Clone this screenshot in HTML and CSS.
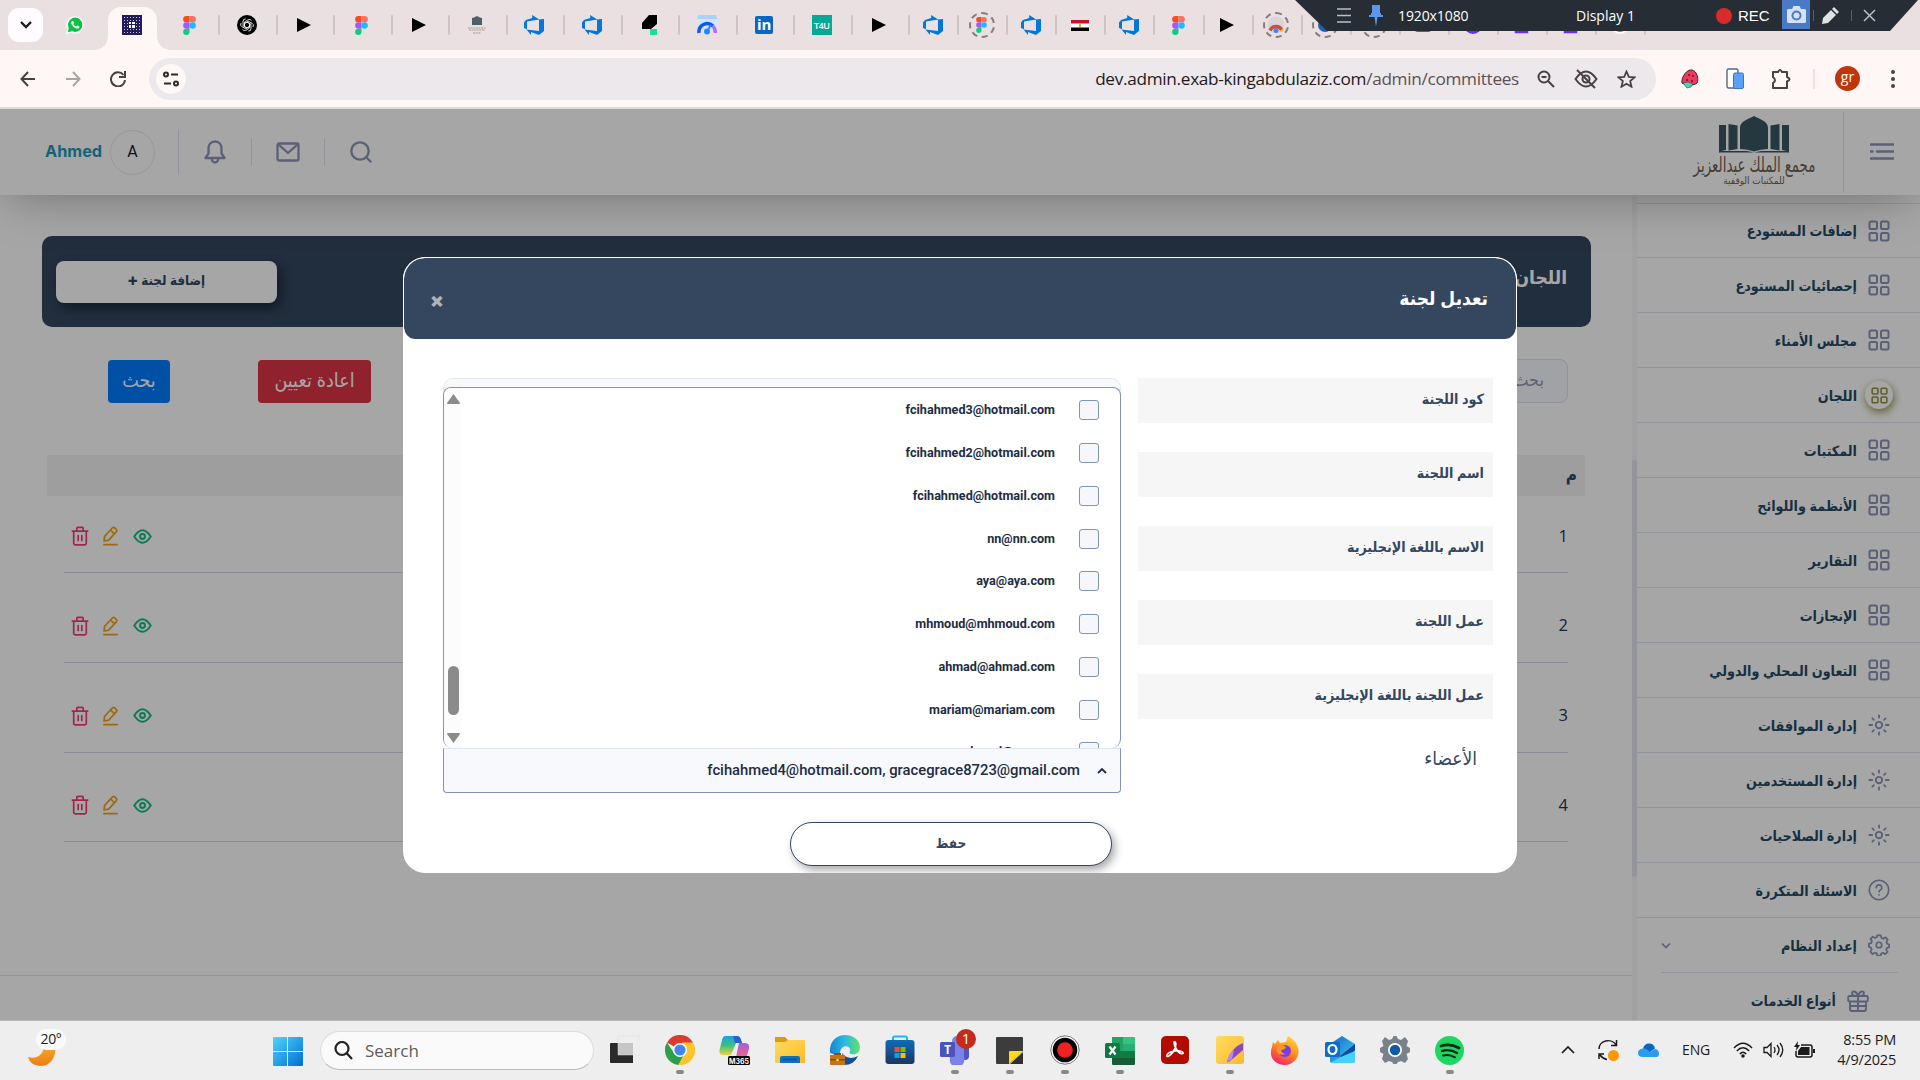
FILE: index.html
```html
<!DOCTYPE html>
<html lang="ar">
<head>
<meta charset="utf-8">
<title>اللجان</title>
<link rel="stylesheet" href="styles.css">
</head>
<body>
<svg class="defs" width="0" height="0">
  <defs>
    <linearGradient id="gWin" x2="1" y2="1"><stop stop-color="#4fd3ff"/><stop offset="1" stop-color="#0070d0"/></linearGradient>
    <linearGradient id="gMoon" x2="0" y2="1"><stop stop-color="#f4a82c"/><stop offset="1" stop-color="#ef7d12"/></linearGradient>
    <linearGradient id="gFold" x2="1" y2="1"><stop stop-color="#ffdc60"/><stop offset="1" stop-color="#fdb92a"/></linearGradient>
    <linearGradient id="gEdge" x2="1" y2="0"><stop stop-color="#1583d8"/><stop offset=".5" stop-color="#2bbbe0"/><stop offset="1" stop-color="#66e06a"/></linearGradient>
    <linearGradient id="gStore" x2="0" y2="1"><stop stop-color="#0f6cb8"/><stop offset="1" stop-color="#1d3560"/></linearGradient>
    <linearGradient id="gCopA" x2="0" y2="1"><stop stop-color="#1aa0e8"/><stop offset=".5" stop-color="#3cc07d"/><stop offset="1" stop-color="#f0d040"/></linearGradient>
    <linearGradient id="gCopB" x2="0" y2="1"><stop stop-color="#a060e0"/><stop offset=".6" stop-color="#f06090"/><stop offset="1" stop-color="#f59050"/></linearGradient>
    <linearGradient id="gFox" x1=".8" y1="0" x2=".3" y2="1"><stop stop-color="#ffe03a"/><stop offset=".5" stop-color="#ff8a1e"/><stop offset="1" stop-color="#f0206a"/></linearGradient>
    <linearGradient id="gOut" x2="1" y2="1"><stop stop-color="#1467c0"/><stop offset="1" stop-color="#3fd0fa"/></linearGradient>
  </defs>
  <symbol id="figma" viewBox="0 0 12 18"><path fill="#f24e1e" d="M6 0H3a3 3 0 0 0 0 6h3z"/><path fill="#ff7262" d="M6 0h3a3 3 0 0 1 0 6H6z"/><path fill="#a259ff" d="M6 6H3a3 3 0 0 0 0 6h3z"/><circle cx="9" cy="9" r="3" fill="#1abcfe"/><path fill="#0acf83" d="M6 12H3a3 3 0 1 0 3 3z"/></symbol>
  <symbol id="play" viewBox="0 0 14 16"><path d="M0 1l14 7L0 15z"/></symbol>
  <symbol id="azure" viewBox="0 0 20 20"><path fill="#0078d7" d="M20 4v12l-5 4-8-3v3l-4.500-5.500L15 16V4.500zM15.200 4.600L8.200 0v3L2 5 0 7.500v5.600l3 1.200V6.500z"/></symbol>
  <symbol id="whatsapp" viewBox="0 0 20 20"><path fill="#fff" d="M0 20l1.500-5.500A9.600 9.600 0 1 1 5.600 18.500z"/><circle cx="10.200" cy="9.700" r="8" fill="#0cc143"/><path fill="#0cc143" d="M2 18l1.200-5 4 4z"/><path fill="#fff" d="M6.500 5.700c.7-.8 1.500-.5 1.800.3l.6 1.500c.1.500-.7 1-.7 1.300.8 1.500 1.800 2.300 3.200 2.900.5 0 .9-1.200 1.400-1.100l1.900 1c.5.400.1 1.700-.9 2.200-2 1-7.700-2.300-8-6 0-.9.300-1.600.7-2.100z"/></symbol>
  <symbol id="gpt" viewBox="0 0 20 20"><circle cx="10" cy="10" r="10"/><g fill="none" stroke="#fff" stroke-width=".8"><path id="petal" d="M10 7l2.600 1.500V13L9 15.200a2.600 2.600 0 0 1-3.600-1"/><use href="#petal" transform="rotate(60 10 10)"/><use href="#petal" transform="rotate(120 10 10)"/><use href="#petal" transform="rotate(180 10 10)"/><use href="#petal" transform="rotate(240 10 10)"/><use href="#petal" transform="rotate(300 10 10)"/></g></symbol>
  <symbol id="grid" viewBox="0 0 22 22"><g fill="none" stroke="currentColor" stroke-width="2"><rect x="1.500" y="1.500" width="7.500" height="7.500" rx="1.500"/><rect x="13" y="1.500" width="7.500" height="7.500" rx="1.500"/><rect x="1.500" y="13" width="7.500" height="7.500" rx="1.500"/><rect x="13" y="13" width="7.500" height="7.500" rx="1.500"/></g></symbol>
  <symbol id="sun" viewBox="0 0 24 24"><g fill="none" stroke="currentColor" stroke-width="2" stroke-linecap="round"><circle cx="12" cy="12" r="3.500"/><path d="M12 1.500v2.500M12 20v2.500M1.500 12h3M19.500 12h3M4.800 4.800l1.600 1.600M17.600 17.600l1.600 1.600M4.800 19.200l1.600-1.600M17.600 6.400l1.600-1.600"/></g></symbol>
  <symbol id="help" viewBox="0 0 24 24"><g fill="none" stroke="currentColor" stroke-width="1.800" stroke-linecap="round"><circle cx="12" cy="12" r="10.600"/><path d="M9 9.500a3 3 0 1 1 4.500 2.500c-1 .6-1.500 1-1.500 2.200M12 17.300v.2"/></g></symbol>
  <symbol id="gear" viewBox="0 0 24 24"><g fill="none" stroke="currentColor" stroke-width="1.900" stroke-linejoin="round"><circle cx="12" cy="12" r="3"/><path d="M10 1.500h4l.6 2.800 2 .9 2.500-1.600 2.400 2.600-1.400 2.500.8 2 2.100.8v3l-2.300.6-.8 2 1.500 2.400-2.600 2.500-2.400-1.500-2 .8-.7 2.300h-3.500l-.7-2.400-2-.8-2.500 1.500-2.400-2.500 1.500-2.400-.8-2L1 14v-3.500l2.500-.6.8-2-1.500-2.500 2.400-2.500 2.500 1.400 1.800-.8z"/></g></symbol>
  <symbol id="gift" viewBox="0 0 22 22"><g fill="none" stroke="currentColor" stroke-width="1.900" stroke-linejoin="round"><rect x="1.200" y="6" width="19.600" height="5.500" rx="1.200"/><path d="M3 11.500V19q0 2 2 2h12q2 0 2-2v-7.500M11 6v15M11 6C8 6 5 5.500 5 3.200S9 0 11 6c2-6 6-5 6-2.800S14 6 11 6M3 16h16"/></g></symbol>
  <symbol id="trash" viewBox="0 0 20 22"><g fill="none" stroke="currentColor" stroke-width="1.900" stroke-linecap="round"><path d="M1.500 5.500h17M3 5.500V19q0 1.800 1.800 1.800h10.400Q17 20.800 17 19V5.500M6.500 5V2.500q0-1 1-1h5q1 0 1 1V5M8 10.500v5.500M12 10.500v5.500"/></g></symbol>
  <symbol id="pen" viewBox="0 0 18 22"><g fill="none" stroke="currentColor" stroke-width="1.900" stroke-linejoin="round"><path d="M2 16.500l.5-5L11 2.200q1.300-1.300 2.700 0l1.600 1.500q1.300 1.300 0 2.700L7 15.500zM9.300 4.500l3.800 4M1 20.500h16"/></g></symbol>
  <symbol id="eye" viewBox="0 0 20 16"><g fill="none" stroke="currentColor" stroke-width="2.100"><path d="M1.200 8q8.800-13.500 17.600 0-8.800 13.500-17.600 0z"/><circle cx="10" cy="8" r="2.600"/></g></symbol>
</svg>

<header class="tabs" dir="ltr">
  <div class="tab-menu"><svg width="14" height="10" viewBox="0 0 14 10"><path d="M2 2l5 5 5-5" fill="none" stroke="#201a1b" stroke-width="2.400"/></svg></div>
  <div class="tab pinned"><svg width="18" height="20"><use href="#whatsapp"/></svg></div>
  <div class="tab active"><svg width="20" height="20" viewBox="0 0 20 20"><path fill="#201c56" d="M0 0h20v20H0z"/><g fill="none" stroke="#c9c6e6" stroke-dasharray="1 2"><path d="M2 2.500h17M2 5.500h17M2 8.500h17M2 11.500h17M2 14.500h17M2 17.500h17"/></g><path fill="#fff" d="M7 7h2v2H7zM10 7h3v2h-3zM7 10h2v3H7zM10 10h3v3h-3z"/></svg></div>
  <div class="tab first"><svg width="13" height="19"><use href="#figma"/></svg></div>
  <div class="tab"><svg width="20" height="20"><use href="#gpt"/></svg></div>
  <div class="tab"><svg width="14" height="16"><use href="#play"/></svg></div>
  <div class="tab"><svg width="13" height="19"><use href="#figma"/></svg></div>
  <div class="tab"><svg width="14" height="16"><use href="#play"/></svg></div>
  <div class="tab"><svg width="20" height="18" viewBox="0 0 20 18"><path fill="#4d6069" d="M5 2l2-.5L10 0l3 1.500 2 .5v7H5z"/><path d="M1 12h18M2 14h16M6 17h8" stroke="#a79a90" stroke-dasharray="2 .6"/></svg></div>
  <div class="tab"><svg width="20" height="20"><use href="#azure"/></svg></div>
  <div class="tab"><svg width="20" height="20"><use href="#azure"/></svg></div>
  <div class="tab"><svg width="15" height="20" viewBox="0 0 15 20"><path d="M7 0h8v9l-6 5H0V8z"/><path fill="#1bdc9a" d="M8 14h7v6H8z"/></svg></div>
  <div class="tab"><svg width="20" height="20" viewBox="0 0 20 20"><path fill="#a9d2fb" d="M1 0h18l1 4H0z"/><path fill="#cfe6fd" d="M0 4h20v11H0z"/><path d="M2 18a8.300 8.300 0 0 1 14-7" fill="none" stroke="#1556f0" stroke-width="3.500"/><path d="M16 11q2.500 3 2.300 7" fill="none" stroke="#b66bf5" stroke-width="3.500"/><circle cx="10" cy="16.500" r="3" fill="#1a8cff"/><path d="M10 16l4-6" stroke="#1a8cff" stroke-width="2"/></svg></div>
  <div class="tab"><span class="fav linkedin">in</span></div>
  <div class="tab"><span class="fav teal">T4U</span></div>
  <div class="tab"><svg width="14" height="16"><use href="#play"/></svg></div>
  <div class="tab narrow"><svg width="20" height="20"><use href="#azure"/></svg></div>
  <div class="tab narrow"><span class="ring"><svg width="11" height="16"><use href="#figma"/></svg></span></div>
  <div class="tab narrow"><svg width="20" height="20"><use href="#azure"/></svg></div>
  <div class="tab narrow"><svg width="18" height="11" viewBox="0 0 18 11"><path fill="#fff" d="M0 0h18v11H0z"/><path fill="#c8102e" d="M0 0h18v3.500H0z"/><path d="M0 7.500h18V11H0z"/><path fill="#d6a53a" d="M8 4h2v3H8z"/></svg></div>
  <div class="tab narrow"><svg width="20" height="20"><use href="#azure"/></svg></div>
  <div class="tab narrow"><svg width="13" height="19"><use href="#figma"/></svg></div>
  <div class="tab narrow"><svg width="14" height="16"><use href="#play"/></svg></div>
  <div class="tab narrow"><span class="ring"><svg width="18" height="18" viewBox="0 0 18 18"><circle cx="9" cy="9" r="8.500" fill="#d9d5d6"/><path d="M3 14.500a6.500 6.500 0 0 1 12 0" fill="none" stroke="#d9473a" stroke-width="3.500"/><circle cx="9" cy="14.500" r="2.500" fill="#4285f4"/><path d="M12 15.500l4-3v3z" fill="#fbc116"/></svg></span></div>
  <div class="tab narrow"><span class="ring"><svg width="16" height="16"><circle cx="8" cy="8" r="7" fill="#1a62b8"/></svg></span></div>
  <div class="tab narrow"><span class="ring"><svg width="16" height="16"><circle cx="8" cy="8" r="6" fill="#3aa757"/></svg></span></div>
  <div class="tab narrow"><svg width="18" height="14"><rect width="18" height="14" rx="4" fill="#e0244a"/></svg></div>
  <div class="tab narrow"><svg width="18" height="18"><circle cx="9" cy="9" r="9" fill="#6a2cf5"/></svg></div>
  <div class="tab narrow"><svg width="16" height="18"><path d="M2 1v15h11V1" fill="#fff" stroke="#6a2cf5" stroke-width="2.500"/></svg></div>
  <div class="tab narrow"><svg width="16" height="18"><path d="M2 1v15h11V1" fill="#fff" stroke="#6a2cf5" stroke-width="2.500"/></svg></div>
  <div class="tab narrow"><svg width="18" height="18"><circle cx="9" cy="9" r="8" fill="#2fa45a" stroke="#fff" stroke-width="2"/></svg></div>

  <div class="recorder">
    <svg width="14" height="18" viewBox="0 0 14 18"><path d="M0 2h14M0 8.500h14M0 15h14" stroke="#b9bfc5" stroke-width="1.600"/></svg>
    <svg class="rec-pin" width="14" height="22" viewBox="0 0 14 22"><path fill="#5b97ee" d="M3 0h8v8h1v2h2v2H8.500L7 22l-1.500-10H0v-2h2V8h1z"/></svg>
    <span class="rec-size">1920x1080</span>
    <span class="rec-display">Display 1</span>
    <span class="rec-dot"></span><span class="rec-label">REC</span>
    <span class="rec-cam"><svg width="19" height="17" viewBox="0 0 19 17"><path fill="#d5e2f5" d="M1 3h4l1.500-3h6L14 3h4l1 1v12l-1 1H1l-1-1V4z"/><circle cx="9.500" cy="9.500" r="5" fill="#4a7ac6"/><circle cx="9.500" cy="9.500" r="3" fill="#d5e2f5"/></svg></span>
    <i class="rec-sep"></i>
    <svg width="17" height="18" viewBox="0 0 17 18"><path fill="#dfe2e5" d="M0 17l1-6 8-8 5 5-8 8zM10 2l2-2 5 5-2 2z"/></svg>
    <i class="rec-sep wide"></i>
    <svg width="13" height="13" viewBox="0 0 13 13"><path d="M1 1l11 11M12 1L1 12" stroke="#b9bfc5" stroke-width="1.500"/></svg>
  </div>
</header>

<nav class="toolbar" dir="ltr">
  <svg width="16" height="16" viewBox="0 0 16 16"><path d="M15 8H2M8 1L1.500 8 8 15" fill="none" stroke="#4b3f41" stroke-width="2"/></svg>
  <svg width="16" height="16" viewBox="0 0 16 16"><path d="M1 8h13M8 1l6.500 7L8 15" fill="none" stroke="#aca3a4" stroke-width="2"/></svg>
  <svg width="16" height="16" viewBox="0 0 16 16"><path d="M13.500 4A7 7 0 1 0 15 9M15 0v6H9" fill="none" stroke="#4b3f41" stroke-width="2"/></svg>
  <div class="omnibox">
    <span class="site"><svg width="16" height="16" viewBox="0 0 16 16"><g fill="none" stroke="#33292b" stroke-width="2"><circle cx="3" cy="3.500" r="2"/><path d="M8 3.500h7M1 12.500h7"/><circle cx="13" cy="12.500" r="2"/></g></svg></span>
    <span class="url">dev.admin.exab-kingabdulaziz.com<em>/admin/committees</em></span>
    <svg width="18" height="18" viewBox="0 0 18 18"><g fill="none" stroke="#4b3f41" stroke-width="2"><circle cx="7" cy="7" r="5.500"/><path d="M11 11l6 6M4.500 7h5"/></g></svg>
    <svg width="24" height="20" viewBox="0 0 24 20"><g fill="none" stroke="#4b3f41" stroke-width="2"><path d="M1.500 10Q12-5 22.500 10 12 25 1.500 10z"/><circle cx="12" cy="10" r="3.500"/><path d="M3 1l18 18"/></g></svg>
    <svg width="19" height="18" viewBox="0 0 19 18"><path d="M9.500 1.500l2.300 5.300 5.700.5-4.300 3.800 1.300 5.600-5-3-5 3 1.300-5.600L1.500 7.300l5.700-.5z" fill="none" stroke="#4b3f41" stroke-width="1.800"/></svg>
  </div>
  <div class="ext">
    <svg width="18" height="20" viewBox="0 0 18 20"><path d="M11 1c5 1 7 9 5 13-3 3-12 2-15 0C0 8 6 0 11 1z" fill="#f0385f" stroke="#3c2228"/><path fill="#4fd3a7" stroke="#245" stroke-width=".6" d="M2 14l5-1 5 2-2 3-4 1z"/><path d="M8 5v2M12 6v2M6 10v2M11 11v2" stroke="#5e1428" stroke-width="1.400"/></svg>
    <svg width="18" height="21" viewBox="0 0 18 21"><rect x="1" y="1" width="11" height="19" rx="1.500" fill="#fff" stroke="#5b6672" stroke-width="1.400"/><rect x="7.500" y="5" width="10" height="15.500" rx="1.500" fill="#5aa2f8" stroke="#3a76c8"/></svg>
    <svg width="21" height="20" viewBox="0 0 21 20"><path d="M2 3h5q2-4 4 0h5v5q5 2 0 4.500V19H2v-5q4-2.500 0-6z" fill="none" stroke="#4b3f41" stroke-width="2" stroke-linejoin="round"/></svg>
    <i class="ext-sep"></i>
    <span class="avatar">gr</span>
    <svg width="4" height="18" viewBox="0 0 4 18"><g fill="#4b3f41"><circle cx="2" cy="2" r="2"/><circle cx="2" cy="9" r="2"/><circle cx="2" cy="16" r="2"/></g></svg>
  </div>
</nav>

<div class="page" dir="ltr">
  <div class="topbar">
    <span class="user">Ahmed</span><span class="initial">A</span>
    <span class="tool bell"><svg width="22" height="24" viewBox="0 0 22 24"><g fill="none" stroke="currentColor" stroke-width="2.300" stroke-linejoin="round"><path d="M11 1.500c-4.500 0-6.500 3.500-6.500 7v5L1.500 18h19l-3-4.500v-5c0-3.500-2-7-6.500-7zM7.500 18.500q1 4 3.500 4t3.500-4"/></g></svg></span>
    <span class="tool"><svg width="24" height="20" viewBox="0 0 24 20"><g fill="none" stroke="currentColor" stroke-width="2.300" stroke-linejoin="round"><rect x="1.500" y="1.500" width="21" height="17" rx="1.500"/><path d="M2 2l10 9L22 2"/></g></svg></span>
    <span class="tool"><svg width="22" height="22" viewBox="0 0 22 22"><g fill="none" stroke="currentColor" stroke-width="2.300" stroke-linecap="round"><circle cx="10" cy="10" r="8.700"/><path d="M17 17l3.500 3.500"/></g></svg></span>
    <div class="brand">
      <svg width="70" height="37" viewBox="0 0 70 37"><g fill="#3a5663"><path d="M0 9h7v25q-3.500 0-7 2.500zM9.500 8l9 1.500V33l-9 1.500zM21 33V12C21 5 29 3.500 35 0c6 3.500 14 5 14 12v21q-8 0-14 2.500Q29 33 21 33zM51.500 9.500l9-1.500v26.500l-9-1.500zM63 9h7v27.500Q66.500 34 63 34z"/><path d="M0 35h28l7 1.500 7-1.500h28v1.500H0z"/></g></svg>
      <span class="brand-name">مجمع الملك عبدالعزيز</span>
      <span class="brand-sub">للمكتبات الوقفية</span>
    </div>
    <span class="menu-btn"><svg width="24" height="18" viewBox="0 0 24 18"><path d="M1 1.500h22M7 8.500h16M1 15.500h22M1 8.500h1.500" stroke="currentColor" stroke-width="2.600" stroke-linecap="round"/></svg></span>
  </div>
  <div class="content">
    <main class="main" dir="rtl">
      <div class="banner"><h1>اللجان</h1><button class="add">إضافة لجنة <b>+</b></button></div>
      <div class="filters"><div class="search-input">بحث</div><button class="btn red">اعادة تعيين</button><button class="btn blue">بحث</button></div>
      <div class="thead">م</div>
      <div class="row"><span>1</span><div class="acts" dir="ltr"><svg class="del"><use href="#trash"/></svg><svg class="edit"><use href="#pen"/></svg><svg class="view"><use href="#eye"/></svg></div></div>
      <div class="row"><span>2</span><div class="acts" dir="ltr"><svg class="del"><use href="#trash"/></svg><svg class="edit"><use href="#pen"/></svg><svg class="view"><use href="#eye"/></svg></div></div>
      <div class="row"><span>3</span><div class="acts" dir="ltr"><svg class="del"><use href="#trash"/></svg><svg class="edit"><use href="#pen"/></svg><svg class="view"><use href="#eye"/></svg></div></div>
      <div class="row"><span>4</span><div class="acts" dir="ltr"><svg class="del"><use href="#trash"/></svg><svg class="edit"><use href="#pen"/></svg><svg class="view"><use href="#eye"/></svg></div></div>
      <div class="foot"></div>
    </main>
    <div class="track"><div class="thumb"></div></div>
    <aside class="sidebar" dir="rtl">
      <div class="item"><svg><use href="#grid"/></svg><span>إضافات المستودع</span></div>
      <div class="item"><svg><use href="#grid"/></svg><span>إحصائيات المستودع</span></div>
      <div class="item"><svg><use href="#grid"/></svg><span>مجلس الأمناء</span></div>
      <div class="item on"><i><svg><use href="#grid"/></svg></i><span>اللجان</span></div>
      <div class="item"><svg><use href="#grid"/></svg><span>المكتبات</span></div>
      <div class="item"><svg><use href="#grid"/></svg><span>الأنظمة واللوائح</span></div>
      <div class="item"><svg><use href="#grid"/></svg><span>التقارير</span></div>
      <div class="item"><svg><use href="#grid"/></svg><span>الإنجازات</span></div>
      <div class="item"><svg><use href="#grid"/></svg><span>التعاون المحلي والدولي</span></div>
      <div class="item"><svg><use href="#sun"/></svg><span>إدارة الموافقات</span></div>
      <div class="item"><svg><use href="#sun"/></svg><span>إدارة المستخدمين</span></div>
      <div class="item"><svg><use href="#sun"/></svg><span>إدارة الصلاحيات</span></div>
      <div class="item"><svg><use href="#help"/></svg><span>الاسئلة المتكررة</span></div>
      <div class="item last"><svg><use href="#gear"/></svg><span>إعداد النظام</span><svg class="chev" viewBox="0 0 10 7"><path d="M1 1.500l4 4 4-4" fill="none" stroke="currentColor" stroke-width="1.700"/></svg></div>
      <div class="item sub"><svg><use href="#gift"/></svg><span>أنواع الخدمات</span></div>
    </aside>
  </div>
  <div class="overlay">
    <section class="modal" dir="rtl">
      <div class="modal-head"><h2>تعديل لجنة</h2><span class="close">×</span></div>
      <div class="form">
        <div class="labels">
          <label>كود اللجنة</label><label>اسم اللجنة</label><label>الاسم باللغة الإنجليزية</label><label>عمل اللجنة</label><label>عمل اللجنة باللغة الإنجليزية</label>
          <p>الأعضاء</p>
        </div>
        <div class="fields">
          <div class="peek"></div>
          <div class="list">
            <div class="options">
              <div class="opt"><i></i><span>fcihahmed3@hotmail.com</span></div>
              <div class="opt"><i></i><span>fcihahmed2@hotmail.com</span></div>
              <div class="opt"><i></i><span>fcihahmed@hotmail.com</span></div>
              <div class="opt"><i></i><span>nn@nn.com</span></div>
              <div class="opt"><i></i><span>aya@aya.com</span></div>
              <div class="opt"><i></i><span>mhmoud@mhmoud.com</span></div>
              <div class="opt"><i></i><span>ahmad@ahmad.com</span></div>
              <div class="opt"><i></i><span>mariam@mariam.com</span></div>
              <div class="opt"><i></i><span>ahmed@aa.com</span></div>
            </div>
            <div class="scroll"><svg width="13" height="10"><path d="M6.500 0L13 9q0 1-1 1H1q-1 0-1-1z" fill="#8b8b8b"/></svg><b></b><svg width="13" height="10"><path d="M6.500 10L0 1q0-1 1-1h11q1 0 1 1z" fill="#8b8b8b"/></svg></div>
          </div>
          <div class="select"><svg width="10" height="7" viewBox="0 0 10 7"><path d="M1 6l4-4 4 4" fill="none" stroke="#212c42" stroke-width="1.900"/></svg><span dir="ltr">fcihahmed4@hotmail.com, gracegrace8723@gmail.com</span></div>
          <button class="save">حفظ</button>
        </div>
      </div>
    </section>
  </div>
</div>

<footer class="taskbar" dir="ltr">
  <div class="weather"><svg width="28" height="24" viewBox="0 0 28 24"><path fill="url(#gMoon)" d="M0 13c9 3 16-3 16-11h11c2 12-6 20-14 20C6 22 1 18 0 13z"/></svg><span>20°</span></div>
  <svg class="win" width="30" height="30" viewBox="0 0 30 30"><path fill="url(#gWin)" d="M0 1h14v14H0zM15 1h14q1 0 1 1v13H15zM0 16h14v14H1q-1 0-1-1zM15 16h15v13q0 1-1 1H15z"/></svg>
  <div class="tb-search"><svg width="19" height="19" viewBox="0 0 19 19"><g fill="none" stroke="#222" stroke-width="2.200"><circle cx="8" cy="7.500" r="6.500"/><path d="M12.500 12l5.500 6"/></g></svg>Search</div>
  <div class="apps">
    <div class="app"><svg width="30" height="30" viewBox="0 0 30 30"><path fill="#292929" d="M0 9q0-1 1-1h22v20H1q-1 0-1-1z"/><path fill="#eee" fill-opacity=".8" stroke="#ddd" stroke-width=".5" d="M8 1h22v19H8z"/></svg></div>
    <div class="app run"><svg width="30" height="30" viewBox="0 0 30 30"><path fill="#dc3b30" d="M15 15L2 7.500a15 15 0 0 1 26 0z"/><path fill="#2f9e4b" d="M2 7.500A15 15 0 0 0 13.500 30L20 18 9 18z"/><path fill="#fcc52e" d="M28 7.500A15 15 0 0 1 13.500 30L21.500 16 17 7.500z"/><circle cx="15" cy="15" r="7" fill="#fff"/><circle cx="15" cy="15" r="5.600" fill="#3f86ee"/></svg></div>
    <div class="app"><svg width="31" height="30" viewBox="0 0 31 30"><path fill="url(#gCopA)" d="M6 1h12q3 0 4 4l1 3h-6L12 20H4q-5 0-3-7L3 5q1-4 3-4z"/><path fill="#2a5fd0" d="M14 1h4q3 0 4 4l1 3h-7z"/><path fill="url(#gCopB)" d="M20 8h6q5 0 4 6l-3 9q-1 5-6 5h-9q4-1 5-6z"/><rect x="9" y="21" width="22" height="9" rx="1.500" fill="#000"/><text x="20" y="28.500" font-family="Inter" font-weight="700" font-size="7" fill="#fff" text-anchor="middle">M365</text></svg></div>
    <div class="app"><svg width="30" height="28" viewBox="0 0 30 28"><path fill="#dc9a0c" d="M0 1h10l3 3v4H0z"/><path fill="url(#gFold)" d="M0 6h10l3-2h16q1 0 1 1v22H1q-1 0-1-1z"/><path fill="#0f6fc0" d="M5 27v-5q0-2 2-2h16q2 0 2 2v5z"/><path d="M8 23.500h14" stroke="#0a4f94" stroke-width="1.500"/></svg></div>
    <div class="app"><svg width="30" height="30" viewBox="0 0 30 30"><path fill="#0f4f9c" d="M12 18q6 8 16 3-4 9-14 9z"/><path fill="url(#gEdge)" d="M0 18C-1 7 6 0 15 0s15 6 15 12-4 8-9 7c-3-1 0-2-1-5s-5-4-8-1-2 6-1 9z"/><path fill="#c57417" d="M0 20h15v9q0 1-1 1H1q-1 0-1-1z"/><path fill="#8d4c0c" d="M0 24h15v1.500H0zM4 20v-2h7v2z"/><circle cx="7.500" cy="25" r="1.300" fill="#ffd867"/></svg></div>
    <div class="app"><svg width="30" height="30" viewBox="0 0 30 30"><path d="M8 6V3q0-1.500 1.500-1.500h11q1.500 0 1.500 1.500v3" fill="none" stroke="#1cb8f5" stroke-width="2"/><rect x=".5" y="5" width="29" height="24" rx="3" fill="url(#gStore)"/><path fill="#f25022" d="M9.500 12h5v5h-5z"/><path fill="#7fba00" d="M15.500 12h5v5h-5z"/><path fill="#00a4ef" d="M9.500 18h5v5h-5z"/><path fill="#ffb900" d="M15.500 18h5v5h-5z"/></svg></div>
    <div class="app run"><svg width="30" height="30" viewBox="0 0 30 30"><circle cx="17" cy="6" r="5" fill="#7b83eb"/><rect x="19" y="10" width="10" height="15" rx="4" fill="#4f56bd"/><path fill="#7b83eb" d="M9 10h15v12a7 7 0 0 1-14 5z"/><rect y="7" width="15" height="15" rx="1.500" fill="#4b53bc"/><text x="7.500" y="18.500" font-family="Open Sans" font-weight="700" font-size="11.500" fill="#fff" text-anchor="middle">T</text></svg><span class="badge">1</span></div>
    <div class="app run"><svg width="27" height="27" viewBox="0 0 27 27"><path fill="#3c3c3c" d="M0 1q0-1 1-1h25q1 0 1 1v13L13 27H1q-1 0-1-1z"/><path fill="#ffd91c" d="M13 27V15q0-1 1-1h13z"/><path fill="#303030" d="M27 15v12H14z"/></svg></div>
    <div class="app run"><svg width="30" height="30"><circle cx="15" cy="15" r="14.200" fill="#fff" stroke="#777"/><circle cx="15" cy="15" r="12.300"/><circle cx="15" cy="15" r="7.800" fill="#ee2320"/></svg></div>
    <div class="app run"><svg width="30" height="29" viewBox="0 0 30 29"><path fill="#21a366" d="M7 1h11v14H7z"/><path fill="#33c481" d="M18 1h11q1 0 1 1v6H18z"/><path fill="#27b072" d="M18 8h12v7H18z"/><path fill="#107c41" d="M7 15h23v7H7z"/><path fill="#185c37" d="M7 22h23v6q0 1-1 1H8q-1 0-1-1z"/><rect y="7" width="15" height="15" rx="1.500" fill="#0f7a40"/><path d="M4.500 10.500l6 8M10.500 10.500l-6 8" stroke="#fff" stroke-width="2.200"/></svg></div>
    <div class="app"><svg width="28" height="28" viewBox="0 0 28 28"><rect width="28" height="28" rx="5" fill="#b30b00"/><path d="M13 6c3-1 2 6-1 10s-7 6-6 3 9-5 13-4 4 3 1 2.500-7-7-7-11.500z" fill="none" stroke="#fff" stroke-width="1.700"/></svg></div>
    <div class="app run"><svg width="28" height="28" viewBox="0 0 28 28"><rect width="28" height="28" rx="3" fill="url(#gFold)"/><path fill="#8b46c8" d="M27 7v7L13 26q-2 0-2-1 5-14 16-18z"/><path fill="#b58bea" d="M11 27q1-10 7-13-1 6-2 9z"/></svg></div>
    <div class="app"><svg width="28" height="29" viewBox="0 0 28 29"><path fill="url(#gFox)" d="M2 6l2 2 3-4 2 3 6-1 2-6q7 4 9 9c5 9-2 20-12 20S-3 21 1 11z"/><circle cx="14" cy="15" r="6" fill="#7a3ee0"/><path fill="#ff9420" d="M6 10q4-3 9 1-1 3-5 3 1 4 5 4-6 2-9-2z"/></svg></div>
    <div class="app"><svg width="30" height="28" viewBox="0 0 30 28"><path fill="url(#gOut)" d="M5 8L17 0l13 8v17q0 2-2 2H7q-2 0-2-2z"/><path fill="#0a4aa0" d="M15 20L30 8v6L19 24z"/><path fill="#45d2fa" d="M5 27l13-7 12-5v10q0 2-2 2z"/><rect y="6" width="15" height="15" rx="1.500" fill="#0f6cc4"/><ellipse cx="7.500" cy="13.500" rx="4" ry="4.500" fill="none" stroke="#fff" stroke-width="2.200"/></svg></div>
    <div class="app"><svg width="30" height="28" viewBox="0 0 30 28"><path fill="#78828c" d="M12 3l1.500-3h3L18 3l3 1 4-3 3 4-1.500 5 3.500 2v4l-3.500 2 1.500 5-3 4-4-2-3 1-1.500 2h-3L12 26l-3-1-4 2-3-4 1.500-5L0 16v-4l3.500-2L2 5l3-4 4 3z"/><circle cx="15" cy="14" r="7" fill="#fff"/><circle cx="15" cy="14" r="5.200" fill="#0f5aa8"/></svg></div>
    <div class="app run"><svg width="29" height="29" viewBox="0 0 29 29"><circle cx="14.500" cy="14.500" r="14.500" fill="#1ed760"/><g fill="none" stroke="#10271a" stroke-linecap="round"><path d="M6 10q9-3 18 2" stroke-width="2.800"/><path d="M7 15q8-2.500 15 2" stroke-width="2.300"/><path d="M8 19.500q6-1.800 12 1.800" stroke-width="2"/></g></svg></div>
  </div>
  <div class="tray">
    <svg width="14" height="9" viewBox="0 0 14 9"><path d="M1 8l6-6 6 6" fill="none" stroke="#1a1a1a" stroke-width="1.700"/></svg>
    <svg width="22" height="22" viewBox="0 0 22 22"><g fill="none" stroke="#1a1a1a" stroke-width="1.500"><path d="M2 10a9 8 0 0 1 17-4M19.500 1v5.500H14M2 20v-5h5M3 16q3 4 7 4.500"/></g><circle cx="16.500" cy="16.500" r="5.500" fill="#ff9800"/></svg>
    <svg width="21" height="14" viewBox="0 0 21 14"><path fill="#0b66c3" d="M5 6q1-6 7-5.500 4 .5 5 5L9 11z"/><path fill="#2a9cf0" d="M5 14q-5 0-5-4t5-4.500Q8 5 12 9l5-3q4 .5 4 4.500T17 14z"/></svg>
    <span class="lang">ENG</span>
    <svg width="20" height="16" viewBox="0 0 20 16"><g fill="none" stroke="#1a1a1a" stroke-width="1.500"><path d="M1 6q9-9.500 18 0M3.800 9q6.200-6.500 12.400 0M6.800 12q3.200-3.500 6.400 0"/></g><circle cx="10" cy="14" r="1.800" fill="#1a1a1a"/></svg>
    <svg width="21" height="16" viewBox="0 0 21 16"><g fill="none" stroke="#1a1a1a" stroke-width="1.300"><path d="M1 5.500h3l4-4v13l-4-4H1zM11 5q2 3 0 6M14 3q4 5 0 10M17 1q5.500 7 0 14"/></g></svg>
    <svg width="21" height="17" viewBox="0 0 21 17"><path d="M7 4h9q2 0 2 2v8q0 2-2 2H4q-2 0-2-2v-4" fill="none" stroke="#1a1a1a" stroke-width="1.500"/><path fill="#1a1a1a" d="M7 6h8.500v8H4v-4zM19 8h2v4h-2zM4 0L0 6h2.500L2 10l4-6H3.500z"/></svg>
    <div class="clock"><span>8:55 PM</span><span>4/9/2025</span></div>
  </div>
</footer>
</body>
</html>
```
FILE: styles.css
```css
* { box-sizing: border-box; }
body { margin: 0; width: 1920px; height: 1080px; overflow: hidden; display: flex; flex-direction: column; font-family: "Open Sans", "DejaVu Sans Condensed", "DejaVu Sans", sans-serif; background: #eee; }
svg { flex: none; display: block; }
.defs { position: absolute; }
h1, h2, p { margin: 0; }
button { font-family: inherit; border: 0; padding: 0; }

/* browser tabs */
.tabs { position: relative; height: 50px; flex: none; background: #eae0e1; display: flex; align-items: center; }
.tab-menu { width: 35px; height: 34px; margin-left: 8px; border-radius: 11px; background: #fffbff; display: flex; align-items: center; justify-content: center; }
.tab { position: relative; width: 57.5px; flex: none; height: 50px; display: flex; align-items: center; justify-content: center; }
.tab::after { content: ""; position: absolute; right: -1px; top: 15px; width: 2px; height: 20px; background: #cfc4c5; border-radius: 1px; }
.tab.pinned { width: 65px; padding-right: 2px; }
.tab.active { width: 49px; height: 43px; padding: 0 1px 7px 0; align-self: flex-end; background: #fff7f5; border-radius: 13px 13px 0 0; }
.tab.active::before { content: ""; position: absolute; left: -13px; right: -13px; bottom: 0; height: 13px; background: radial-gradient(circle at 0 0, transparent 12.500px, #fff7f5 13px) left / 13px 13px no-repeat, radial-gradient(circle at 100% 0, transparent 12.500px, #fff7f5 13px) right / 13px 13px no-repeat; }
.tab.active::after, .tab.pinned::after { display: none; }
.tab.first { width: 57px; margin-left: 5px; }
.tab { padding-right: 2px; }
.tab.narrow { width: 49.100px; }
.fav { height: 18px; display: flex; align-items: center; justify-content: center; color: #fff; font-weight: 700; }
.linkedin { width: 18px; background: #0a66c2; border-radius: 2px; font-size: 15px; padding-bottom: 2px; }
.teal { width: 20px; height: 20px; background: #08a796; font-size: 9px; letter-spacing: -.5px; font-weight: 600; }
.ring { width: 26px; height: 26px; flex: none; border: 2px dashed #8b7b7e; border-radius: 50%; display: flex; align-items: center; justify-content: center; }
.recorder { position: absolute; left: 1295px; top: 0; width: 623px; height: 31px; padding: 0 27px 0 42px; background: #262d34; clip-path: polygon(0 0, 100% 0, 595px 100%, 32px 100%); display: flex; align-items: center; color: #fff; font-size: 14px; }
.rec-pin { margin-left: 18px; }
.rec-size { margin-left: 15px; width: 178px; font-size: 14px; letter-spacing: -.1px; }
.rec-display { width: 140px; }
.rec-dot { width: 16px; height: 16px; border-radius: 50%; background: #d92b28; }
.rec-label { width: 44px; margin-left: 6px; font-family: "Liberation Sans"; font-size: 15px; }
.rec-cam { width: 28px; height: 29px; background: #4a7ac6; display: flex; align-items: center; justify-content: center; margin-top: -2px; }
.rec-sep { width: 1px; height: 11px; background: #596069; margin: 0 8px 0 3px; }
.rec-sep.wide { margin: 0 11px 0 12px; }

/* address bar */
.toolbar { height: 59px; flex: none; background: #fff7f5; border-bottom: 2px solid #e0dad8; display: flex; align-items: center; gap: 29px; padding-left: 20px; }
.omnibox { width: 1507px; height: 42px; margin-left: -6px; border-radius: 21px; background: #ede8ec; display: flex; align-items: center; padding: 0 20px 0 7px; }
.site { width: 30px; height: 30px; border-radius: 50%; background: #fff7f5; display: flex; align-items: center; justify-content: center; }
.url { margin-left: auto; margin-right: 18px; font-size: 17.200px; letter-spacing: -.3px; color: #211b1c; white-space: nowrap; }
.url em { font-style: normal; color: #5b5154; }
.omnibox svg + svg { margin-left: 19px; }
.ext { display: flex; align-items: center; margin-left: -4px; }
.ext svg + svg { margin-left: 27px; }
.ext-sep { width: 2px; height: 20px; background: #fbd9dd; margin: 0 20px 0 21px; }
.avatar { width: 25px; height: 25px; border-radius: 50%; background: #bf360c; color: #fff; font-size: 14px; line-height: 22px; text-align: center; margin-right: 31px; }

/* application */
.page { position: relative; height: 911px; flex: none; overflow: hidden; background: #fff; display: flex; flex-direction: column; }
.topbar { height: 86px; flex: none; z-index: 2; background: #fff; display: flex; align-items: center; padding-left: 45px; color: #8a96b5; box-shadow: 0 8px 50px -8px rgba(0, 0, 0, .35); }
.user { width: 65px; font: 700 16.300px/20px Inter, sans-serif; color: #1e99b8; padding-bottom: 2px; }
.initial { width: 45px; height: 45px; border: 1px solid #e7eaf3; border-radius: 50%; color: #16192c; font: 16px/42px Roboto, sans-serif; text-align: center; margin-right: 23px; }
.tool { width: 73px; height: 28px; border-left: 1px solid #dfe3ef; display: flex; align-items: center; justify-content: center; padding-right: 1px; }
.tool.bell { height: 46px; }
.brand { width: 179px; height: 80px; margin-left: auto; border-right: 1px solid #dfe3ef; display: flex; flex-direction: column; align-items: center; padding: 4px 0 0; color: #6e6154; }
.brand-name { font-size: 18px; line-height: 22px; white-space: nowrap; font-weight: 400; transform: scale(.83, 1.150); }
.brand-sub { font-size: 10px; line-height: 11px; }
.menu-btn { margin: 0 26px; }
.content { flex: 1; display: flex; }
.main { width: 1632px; padding: 41px 41px 0 42px; }
.banner { height: 91px; border-radius: 10px; background: #34475f; display: flex; justify-content: space-between; padding: 25px 24px 0 14px; }
.banner h1 { font-size: 19px; line-height: 32px; font-weight: 600; color: #fff; }
.add { width: 221px; height: 42px; border-radius: 8px; background: #fff; color: #34475f; font-size: 13.300px; font-weight: 700; box-shadow: 4px 5px 12px rgba(0, 0, 0, .45); padding-bottom: 3px; }
.add b { font-size: 17px; vertical-align: -2px; }
.filters { display: flex; height: 44px; margin-top: 32px; padding: 0 23px 0 66px; }
.search-input { width: 260px; border: 1px solid #dde3f0; border-radius: 8px; background: #f7f9fd; color: #8d99b2; font-size: 18px; line-height: 38px; padding: 0 23px; margin-left: auto; }
.btn { height: 43px; margin-top: 1px; border-radius: 4px; color: #fff; font-size: 19.500px; padding-bottom: 4px; }
.red { width: 113px; background: #dc3545; }
.blue { width: 62px; background: #007bff; margin-right: 88px; }
.thead { height: 41px; margin: 52px 6px 0 5px; background: #f3f3f3; padding-right: 8px; font-size: 17px; font-weight: 700; line-height: 40px; color: #34475f; }
.row { height: 89.800px; margin: 0 23px 0 22px; border-bottom: 1px solid #d5d5ea; display: flex; align-items: center; justify-content: space-between; font-size: 16.500px; color: #22335a; padding-top: 17px; }
.row > span { padding-bottom: 2px; }
.thead + .row { height: 77px; padding-top: 4px; }
.acts { display: flex; align-items: center; gap: 13px; padding-left: 7px; }
.del { width: 18px; height: 20px; color: #f03e75; }
.edit { width: 17px; height: 20px; color: #f0a41b; }
.view { width: 19px; height: 15px; color: #12bd85; margin-left: 1px; }
.foot { height: 46px; margin: 133px -41px 0 -42px; border-top: 1px solid #dfe0ea; }
.track { width: 5px; background: #f7f7fb; padding-top: 265px; }
.thumb { height: 417px; border-radius: 3px; background: #e4e4f2; }
.sidebar { flex: 1; padding-top: 8px; }
.item { height: 55px; padding-right: 30px; border-bottom: 1px solid #e1e4ef; display: flex; align-items: center; color: #8a96b5; }
.item:first-child { border-top: 1px solid #e1e4ef; }
.item svg { width: 22px; height: 22px; }
.item span { margin-right: 11px; color: #234a66; font-size: 14.200px; font-weight: 700; white-space: nowrap; }
.item i { width: 28px; height: 28px; margin: 0 -3px; border-radius: 50%; background: #fff; box-shadow: 1px 3px 8px #8f9240; display: flex; align-items: center; justify-content: center; color: #91903e; }
.item i svg { width: 17px; height: 17px; }
.item.last { margin: 0 22px 0 24px; padding-right: 8px; }
.item.sub { padding-right: 51px; border: 0; }
.item .chev { width: 10px; height: 7px; margin: 0 auto 0 0; }

/* edit dialog */
.overlay { position: absolute; inset: 0; z-index: 5; background: rgba(0, 0, 0, .35); }
.modal { width: 1114px; height: 616px; margin: 148px 0 0 403px; background: #fff; border-radius: 22px; overflow: hidden; }
.modal-head { height: 82px; border: 1px solid #fff; border-bottom: 0; border-radius: 22px 22px 12px 12px; background: #34475f; background-clip: padding-box; display: flex; align-items: center; justify-content: space-between; padding: 0 28px 0 26px; color: #fff; }
.modal-head h2 { font-size: 19px; font-weight: 700; padding-bottom: 2px; }
.close { font: 900 20px Inter, sans-serif; color: #aab3be; padding-top: 2px; }
.form { display: flex; padding: 39px 24px 0 40px; gap: 17px; }
.labels { width: 355px; }
.labels label { display: block; height: 45px; margin-bottom: 29px; background: #f6f6f6; color: #34475f; font-size: 14.200px; font-weight: 600; line-height: 41px; padding-right: 9px; }
.labels p { color: #34475f; font-size: 19px; line-height: 24px; padding-right: 16px; margin-top: -2px; }
.fields { width: 678px; font-family: Roboto, sans-serif; }
.peek { height: 20px; border: 1px solid #e1e7f2; border-radius: 10px; background: #f8f9fd; margin-bottom: -11px; }
.list { position: relative; height: 361px; border: 1px solid #8493b8; border-bottom: 0; border-radius: 8px 8px 9px 9px; background: #fff; display: flex; overflow: hidden; }
.options { flex: 1; padding: 1px 21px 0 0; }
.opt { height: 42.750px; display: flex; align-items: center; gap: 24px; color: #212c42; font-size: 12.600px; font-weight: 700; }
.opt span { padding-bottom: 1px; }
.opt i { width: 20px; height: 20px; border: 1px solid #8493b8; border-radius: 3px; background: #f6f7fa; }
.scroll { width: 18px; background: #fcfcfc; display: flex; flex-direction: column; align-items: center; padding: 6px 0 5px; }
.scroll b { width: 11px; height: 49px; border-radius: 6px; background: #8b8b8b; margin: auto 0 18px; }
.select { height: 45px; border: 1px solid #8493b8; border-top-color: #e1e4f2; border-radius: 0 0 4px 4px; background: #f8f9fd; display: flex; align-items: center; gap: 17px; padding: 0 13px; color: #212c42; font-size: 14.800px; font-weight: 500; }
.select span { padding-bottom: 1px; }
.save { display: block; width: 322px; height: 44px; margin: 29px 9px 0 0; border: 1px solid #34475f; border-radius: 22px; background: #fff; color: #34475f; font: 600 13.500px "Open Sans", "DejaVu Sans Condensed", sans-serif; padding-bottom: 2px; box-shadow: 3px 4px 8px rgba(0, 0, 0, .35); }

/* Windows taskbar */
.taskbar { height: 60px; flex: none; background: #eee; border-top: 1px solid #b8b8b8; display: flex; align-items: center; color: #1b1b1b; }
.weather { position: relative; width: 246px; margin-right: 27px; padding: 10px 0 0 28px; }
.weather span { position: absolute; left: 36px; top: -5px; width: 30px; height: 21px; border-radius: 11px; background: #fafafa; font-size: 14px; line-height: 20px; text-align: center; letter-spacing: -.4px; }
.tb-search { width: 274px; height: 39px; margin-left: 17px; border: 1px solid #dcdcdc; border-bottom-color: #bbb; border-radius: 20px; background: #fafafa; display: flex; align-items: center; gap: 12px; padding-left: 13px; font-size: 17px; color: #5c5c5c; }
.apps { display: flex; margin-left: 3px; }
.app { position: relative; width: 55px; height: 59px; display: flex; align-items: center; justify-content: center; padding-bottom: 1px; }
.app.run::after { content: ""; position: absolute; bottom: 6px; width: 8px; height: 4px; border-radius: 2px; background: #888; }
.badge { position: absolute; left: 29px; top: 8px; width: 20px; height: 20px; border-radius: 50%; background: #c42b1c; color: #fff; font-size: 14px; line-height: 19px; text-align: center; }
.tray { flex: 1; display: flex; align-items: center; font-size: 14px; padding-left: 84px; padding-right: 24px; padding-bottom: 2px; }
.tray svg + svg { margin-left: 22px; }
.tray svg:nth-child(3) { margin-left: 19px; }
.lang { width: 29px; margin: 0 22px 0 23px; letter-spacing: -.1px; }
.lang + svg + svg, .lang + svg + svg + svg { margin-left: 10px; }
.clock { margin-left: auto; display: flex; flex-direction: column; text-align: right; font-size: 14.500px; line-height: 20px; letter-spacing: -.2px; }
```
